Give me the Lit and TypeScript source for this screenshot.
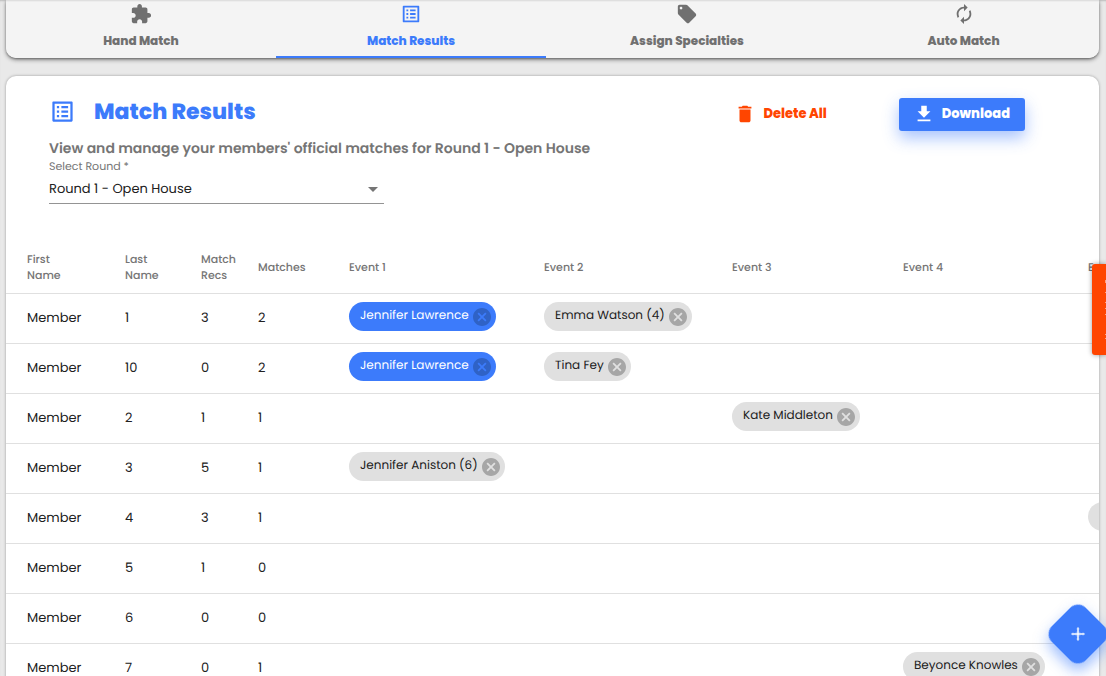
import { LitElement, html, css, svg, nothing } from "lit";
import { customElement, property, state } from "lit/decorators.js";

const ICONS: Record<string, string> = {
  extension:
    "M20.5 11H19V7c0-1.1-.9-2-2-2h-4V3.5C13 2.12 11.88 1 10.5 1S8 2.12 8 3.5V5H4c-1.1 0-1.99.9-1.99 2v3.8H3.5c1.49 0 2.7 1.21 2.7 2.7s-1.21 2.7-2.7 2.7H2V20c0 1.1.9 2 2 2h3.8v-1.5c0-1.49 1.21-2.7 2.7-2.7 1.49 0 2.7 1.21 2.7 2.7V22H17c1.1 0 2-.9 2-2v-4h1.5c1.38 0 2.5-1.12 2.5-2.5S21.88 11 20.5 11z",
  list: "M19 5v14H5V5h14m1.1-2H3.9c-.5 0-.9.4-.9.9v16.2c0 .4.4.9.9.9h16.2c.4 0 .9-.5.9-.9V3.9c0-.5-.5-.9-.9-.9zM11 7h6v2h-6V7zm0 4h6v2h-6v-2zm0 4h6v2h-6zM7 7h2v2H7zm0 4h2v2H7zm0 4h2v2H7z",
  tag: "M21.41 11.58l-9-9C12.05 2.22 11.55 2 11 2H4c-1.1 0-2 .9-2 2v7c0 .55.22 1.05.59 1.42l9 9c.36.36.86.58 1.41.58.55 0 1.05-.22 1.41-.59l7-7c.37-.36.59-.86.59-1.41 0-.55-.23-1.06-.59-1.42zM5.5 7C4.67 7 4 6.33 4 5.5S4.67 4 5.5 4 7 4.67 7 5.5 6.33 7 5.5 7z",
  renew:
    "M12 6v3l4-4-4-4v3c-4.42 0-8 3.58-8 8 0 1.57.46 3.03 1.24 4.26L6.7 14.8c-.45-.83-.7-1.79-.7-2.8 0-3.31 2.69-6 6-6zm6.76 1.74L17.3 9.2c.44.84.7 1.79.7 2.8 0 3.31-2.69 6-6 6v-3l-4 4 4 4v-3c4.42 0 8-3.58 8-8 0-1.57-.46-3.03-1.24-4.26z",
  trash: "M6 19c0 1.1.9 2 2 2h8c1.1 0 2-.9 2-2V7H6v12zM19 4h-3.5l-1-1h-5l-1 1H5v2h14V4z",
  download: "M19 9h-4V3H9v6H5l7 7 7-7zM5 18v2h14v-2H5z",
  cancel:
    "M12 2C6.47 2 2 6.47 2 12s4.47 10 10 10 10-4.47 10-10S17.53 2 12 2zm5 13.59L15.59 17 12 13.41 8.41 17 7 15.59 10.59 12 7 8.41 8.41 7 12 10.59 15.59 7 17 8.41 13.41 12 17 15.59z",
};

const icon = (name: string, size: number, box = "0 0 24 24") => html`
  <svg width=${size} height=${size} viewBox=${box} fill="currentColor" aria-hidden="true">
    ${svg`<path d=${ICONS[name]}></path>`}
  </svg>
`;

interface Row {
  first: string;
  last: string;
  recs: number;
  matches: number;
  events: Record<number, { name: string; locked?: boolean }>;
}

const ROWS: Row[] = [
  { first: "Member", last: "1", recs: 3, matches: 2, events: { 1: { name: "Jennifer Lawrence", locked: true }, 2: { name: "Emma Watson (4)" } } },
  { first: "Member", last: "10", recs: 0, matches: 2, events: { 1: { name: "Jennifer Lawrence", locked: true }, 2: { name: "Tina Fey" } } },
  { first: "Member", last: "2", recs: 1, matches: 1, events: { 3: { name: "Kate Middleton" } } },
  { first: "Member", last: "3", recs: 5, matches: 1, events: { 1: { name: "Jennifer Aniston (6)" } } },
  { first: "Member", last: "4", recs: 3, matches: 1, events: { 5: { name: "" } } },
  { first: "Member", last: "5", recs: 1, matches: 0, events: {} },
  { first: "Member", last: "6", recs: 0, matches: 0, events: {} },
  { first: "Member", last: "7", recs: 0, matches: 1, events: { 4: { name: "Beyonce Knowles" } } },
];

const EVENTS = [1, 2, 3, 4, 5];

@customElement("match-chip")
export class MatchChip extends LitElement {
  @property() name = "";
  @property({ type: Boolean, reflect: true }) locked = false;

  static styles = css`
    :host {
      display: inline-flex;
      align-items: center;
      gap: 4px;
      box-sizing: border-box;
      height: 29px;
      min-width: 64px;
      padding: 0 5px 0 11px;
      border-radius: 15px;
      background: #e0e0e0;
      color: #212121;
      font-size: 12px;
      font-weight: 400;
      white-space: nowrap;
      vertical-align: top;
    }
    :host([locked]) {
      background: #3c7bfb;
      color: #fff;
    }
    .name {
      flex: 1;
      line-height: 28px;
      height: 29px;
    }
    .remove {
      display: flex;
      padding: 0;
      border: 0;
      background: none;
      color: #a6a6a6;
      cursor: pointer;
    }
    :host([locked]) .remove {
      color: #2f62c6;
    }
  `;

  render() {
    return html`
      <span class="name">${this.name}</span>
      <button class="remove" aria-label="Remove">${icon("cancel", 18, "2 2 20 20")}</button>
    `;
  }
}

@customElement("app-root")
export class AppRoot extends LitElement {
  @state() private active = 1;

  private tabs = [
    { label: "Hand Match", icon: "extension" },
    { label: "Match Results", icon: "list" },
    { label: "Assign Specialties", icon: "tag" },
    { label: "Auto Match", icon: "renew" },
  ];

  static styles = css`
    :host {
      display: block;
      height: 100vh;
      overflow: hidden;
      background: #e9e9e9;
      color: #212121;
      font-family: Poppins, Inter, "Open Sans", sans-serif;
      font-size: 13px;
      text-rendering: geometricPrecision;
    }
    button {
      font-family: inherit;
      cursor: pointer;
    }
    .page {
      box-sizing: border-box;
      height: 100%;
      overflow-y: auto;
      scrollbar-width: none;
      padding: 0 7px 0 6px;
      box-shadow: inset 0 2px 2px -1px rgba(0, 0, 0, 0.2);
    }
    .tabs {
      display: grid;
      grid-template-columns: 270fr 270fr 282fr 271fr;
      overflow: hidden;
      border-radius: 0 0 10px 10px;
      background: linear-gradient(#d8d8d8, #f4f4f4 2px);
      box-shadow: 0 2px 4px rgba(0, 0, 0, 0.4), 0 1px 2px rgba(0, 0, 0, 0.3);
    }
    .tab {
      display: flex;
      flex-direction: column;
      align-items: center;
      gap: 8px;
      padding: 3px 0 7px;
      border: 0;
      border-bottom: 2px solid transparent;
      background: none;
      color: #707070;
      font-size: 12px;
      font-weight: 800;
      line-height: 16px;
    }
    .tab svg {
      display: block;
    }
    .tab.on {
      color: #3c7bfb;
      border-bottom-color: #3c7bfb;
    }
    .card {
      margin-top: 18px;
      overflow: hidden;
      border-radius: 10px 10px 0 0;
      background: #fff;
      box-shadow: 0 0 3px rgba(0, 0, 0, 0.35);
    }
    .head {
      display: flex;
      align-items: flex-start;
      gap: 72px;
      padding: 22px 74px 36px 43px;
    }
    .intro {
      flex: 1;
    }
    .title {
      display: flex;
      align-items: center;
      gap: 18px;
      height: 26px;
      color: #3c7bfb;
    }
    h1 {
      margin: 0;
      padding-top: 2px;
      font-size: 22px;
      font-weight: 800;
      line-height: 26px;
    }
    .sub {
      margin: 14px 0 0;
      color: #757575;
      font-size: 14px;
      font-weight: 600;
      line-height: 20px;
      white-space: nowrap;
    }
    .field {
      position: relative;
      width: 335px;
    }
    .field label {
      display: block;
      color: #757575;
      font-size: 11px;
      line-height: 16px;
    }
    .field select {
      display: block;
      width: 100%;
      height: 30px;
      padding: 0 20px 0 0;
      appearance: none;
      border: 0;
      border-bottom: 1px solid #949494;
      border-radius: 0;
      background: none;
      color: #212121;
      font: inherit;
      font-size: 13px;
      text-rendering: inherit;
    }
    .arrow {
      position: absolute;
      right: 6px;
      bottom: 12px;
      border: 5px solid transparent;
      border-top-color: #757575;
      border-bottom: 0;
      pointer-events: none;
    }
    .action {
      display: flex;
      align-items: center;
      gap: 7px;
      height: 33px;
      padding: 0 0 2px;
      border: 0;
      background: none;
      color: #ff4500;
      font-size: 13px;
      font-weight: 800;
    }
    .primary {
      padding: 0 15px 2px 14px;
      border-radius: 3px;
      background: #3c7bfb;
      color: #fff;
      box-shadow: 0 7px 16px rgba(60, 123, 251, 0.45);
    }
    .scroller {
      overflow-x: auto;
      scrollbar-width: none;
    }
    table {
      width: 1240px;
      table-layout: fixed;
      border-collapse: collapse;
    }
    th,
    td {
      padding: 0;
      text-align: left;
      border-bottom: 1px solid #e0e0e0;
    }
    th {
      height: 53px;
      color: #757575;
      font-size: 11px;
      font-weight: 500;
      line-height: 16px;
    }
    td {
      height: 47px;
      padding-bottom: 2px;
      line-height: 18px;
    }
    .first {
      width: 98px;
      padding-left: 21px;
    }
    .last {
      width: 76px;
    }
    .recs {
      width: 57px;
    }
    .matches {
      width: 91px;
    }
    .e1 {
      width: 195px;
    }
    .e2 {
      width: 188px;
    }
    .e3 {
      width: 171px;
    }
    .e4 {
      width: 185px;
    }
    .slot {
      height: 39px;
      padding-top: 8px;
      vertical-align: top;
    }
    .side {
      position: fixed;
      top: 264px;
      right: 0;
      width: 14px;
      height: 91px;
      padding: 0;
      border: 0;
      border-radius: 3px 0 0 3px;
      background: #ff4500;
      box-shadow: 0 0 5px rgba(0, 0, 0, 0.4);
    }
    .side svg {
      display: block;
    }
    .fab {
      position: fixed;
      right: 4px;
      bottom: 18px;
      display: grid;
      place-items: center;
      width: 48px;
      height: 48px;
      padding: 0;
      border: 0;
      border-radius: 11px;
      background: #3c7bfb;
      color: #fff;
      box-shadow: 5px 5px 14px rgba(60, 123, 251, 0.5);
      transform: rotate(45deg);
    }
    .fab svg {
      transform: rotate(45deg);
    }
  `;

  render() {
    return html`
      <div class="page">
        <nav class="tabs">
          ${this.tabs.map(
            (t, i) => html`
              <button class="tab ${i === this.active ? "on" : ""}" @click=${() => (this.active = i)}>
                ${icon(t.icon, 22)}<span>${t.label}</span>
              </button>
            `
          )}
        </nav>
        <main class="card">
          <header class="head">
            <div class="intro">
              <div class="title">${icon("list", 27)}
                <h1>Match Results</h1>
              </div>
              <p class="sub">View and manage your members' official matches for Round 1 - Open House</p>
              <div class="field">
                <label for="round">Select Round *</label>
                <select id="round">
                  <option>Round 1 - Open House</option>
                </select>
                <span class="arrow"></span>
              </div>
            </div>
            <button class="action">${icon("trash", 22)}Delete All</button>
            <button class="action primary">${icon("download", 22)}Download</button>
          </header>
          <div class="scroller">
            <table>
              <thead>
                <tr>
                  <th class="first">First<br />Name</th>
                  <th class="last">Last<br />Name</th>
                  <th class="recs">Match<br />Recs</th>
                  <th class="matches">Matches</th>
                  ${EVENTS.map((e) => html`<th class="e${e}">Event ${e}</th>`)}
                </tr>
              </thead>
              <tbody>
                ${ROWS.map(
                  (r) => html`
                    <tr>
                      <td class="first">${r.first}</td>
                      <td>${r.last}</td>
                      <td>${r.recs}</td>
                      <td>${r.matches}</td>
                      ${EVENTS.map((e) => {
                        const m = r.events[e];
                        return html`<td class="slot">
                          ${m ? html`<match-chip .name=${m.name} ?locked=${!!m.locked}></match-chip>` : nothing}
                        </td>`;
                      })}
                    </tr>
                  `
                )}
              </tbody>
            </table>
          </div>
        </main>
      </div>
      <button class="side" aria-label="Open panel">
        <svg width="14" height="91" fill="#fff" fill-opacity="0.5" aria-hidden="true">
          <path d="M13 16h1v3h-1zM13 28h1v1h-1zM13 38h1v1h-1zM13 44h1v1h-1zM13 50h1v1h-1zM13 70h1v1h-1zM13 74h1v1h-1z"></path>
        </svg>
      </button>
      <button class="fab" aria-label="Add">
        <svg width="14" height="14" viewBox="0 0 14 14" stroke="#fff" stroke-width="1.6" aria-hidden="true">
          <path d="M7 .5v13M.5 7h13"></path>
        </svg>
      </button>
    `;
  }
}
